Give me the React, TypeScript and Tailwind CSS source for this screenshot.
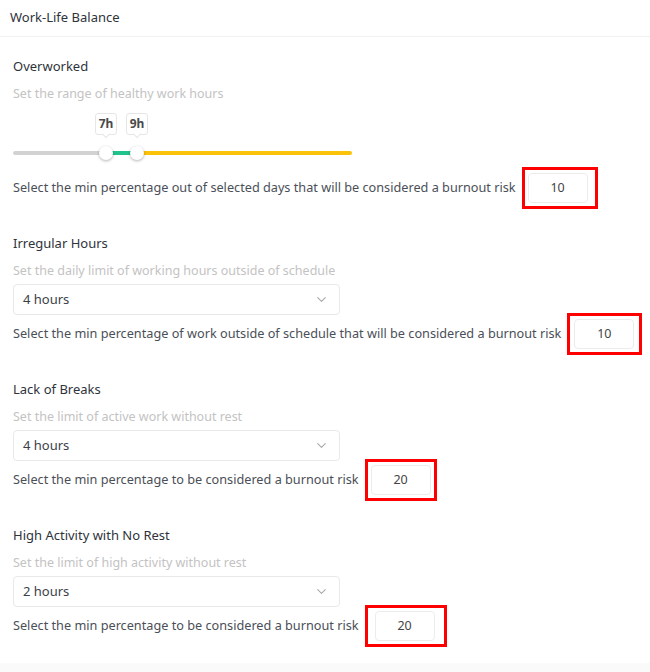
import { ChevronDown } from "lucide-react";

const font = { fontFamily: '"Noto Sans", "Open Sans", sans-serif' };

interface RiskRowProps {
  label: string;
  value: string;
  boxPad: string;
}

const RiskRow = ({ label, value, boxPad }: RiskRowProps) => (
  <div className="flex items-center h-[38px] gap-[6px]">
    <span className="text-[12.7px] text-[#4b4f58] whitespace-nowrap">{label}</span>
    <div className={`border-[3px] border-[#f00] py-[3px] ${boxPad}`}>
      <div className="w-[60px] h-[30px] rounded-[4px] border border-[#ececec] flex items-center justify-center text-[12.5px] text-[#444]">
        {value}
      </div>
    </div>
  </div>
);

interface SelectSectionProps {
  title: string;
  hint: string;
  option: string;
  label: string;
  value: string;
  boxPad: string;
}

const SelectSection = ({ title, hint, option, label, value, boxPad }: SelectSectionProps) => (
  <div className="mt-[27px]">
    <div className="h-[18px] leading-[18px] text-[13px] text-[#2f333b]">{title}</div>
    <div className="mt-[10px] h-[18px] leading-[18px] text-[12.5px] text-[#c3c3c3]">{hint}</div>
    <div className="mt-[4px] w-[327px] h-[31px] rounded-[4px] border border-[#e9e9e9] flex items-center justify-between pl-[9px] pr-[10px]">
      <span className="text-[13px] text-[#3b3f49]">{option}</span>
      <ChevronDown className="w-[15px] h-[15px] text-[#a9a9a9]" strokeWidth={1.8} />
    </div>
    <RiskRow label={label} value={value} boxPad={boxPad} />
  </div>
);

const Tip = ({ text, left }: { text: string; left: number }) => (
  <div className="absolute top-[10px] flex flex-col items-center" style={{ left: left - 11 }}>
    <div className="w-[22px] h-[22px] rounded-[3px] border border-[#e6e6e6] bg-white flex items-center justify-center text-[12px] font-bold text-[#4a4a4a]">
      {text}
    </div>
    <div className="w-[6px] h-[6px] -mt-[4px] rotate-45 bg-white border-r border-b border-[#e6e6e6]" />
  </div>
);

export default function App() {
  return (
    <div className="w-[650px] h-[672px] bg-white flex flex-col" style={font}>
      <div className="h-[37px] border-b border-[#f1f1f1] px-[10px] flex items-center text-[13px] text-[#2f333b]">
        Work-Life Balance
      </div>
      <div className="flex-1 px-[13px]">
        <div className="mt-[20px] h-[18px] leading-[18px] text-[13px] text-[#2f333b]">Overworked</div>
        <div className="mt-[10px] h-[18px] leading-[18px] text-[12.5px] text-[#c3c3c3]">
          Set the range of healthy work hours
        </div>
        <div className="relative h-[66px] w-[339px]">
          <div className="absolute top-[48px] left-0 right-0 h-[4px] rounded-full flex overflow-hidden">
            <div className="w-[93px] bg-[#d2d2d2]" />
            <div className="w-[31px] bg-[#22c38c]" />
            <div className="flex-1 bg-[#fbc20a]" />
          </div>
          <Tip text="7h" left={93} />
          <Tip text="9h" left={124} />
          <div className="absolute top-[43px] left-[86px] w-[14px] h-[14px] rounded-full bg-white shadow-[0_1px_3px_rgba(0,0,0,0.3)]" />
          <div className="absolute top-[43px] left-[117px] w-[14px] h-[14px] rounded-full bg-white shadow-[0_1px_3px_rgba(0,0,0,0.3)]" />
        </div>
        <RiskRow
          label="Select the min percentage out of selected days that will be considered a burnout risk"
          value="10"
          boxPad="pl-[3px] pr-[7px]"
        />
        <SelectSection
          title="Irregular Hours"
          hint="Set the daily limit of working hours outside of schedule"
          option="4 hours"
          label="Select the min percentage of work outside of schedule that will be considered a burnout risk"
          value="10"
          boxPad="pl-[4px] pr-[5px]"
        />
        <SelectSection
          title="Lack of Breaks"
          hint="Set the limit of active work without rest"
          option="4 hours"
          label="Select the min percentage to be considered a burnout risk"
          value="20"
          boxPad="px-[3px]"
        />
        <SelectSection
          title="High Activity with No Rest"
          hint="Set the limit of high activity without rest"
          option="2 hours"
          label="Select the min percentage to be considered a burnout risk"
          value="20"
          boxPad="pl-[7px] pr-[9px]"
        />
      </div>
      <div className="h-[9px] bg-[#fafafa]" />
    </div>
  );
}
